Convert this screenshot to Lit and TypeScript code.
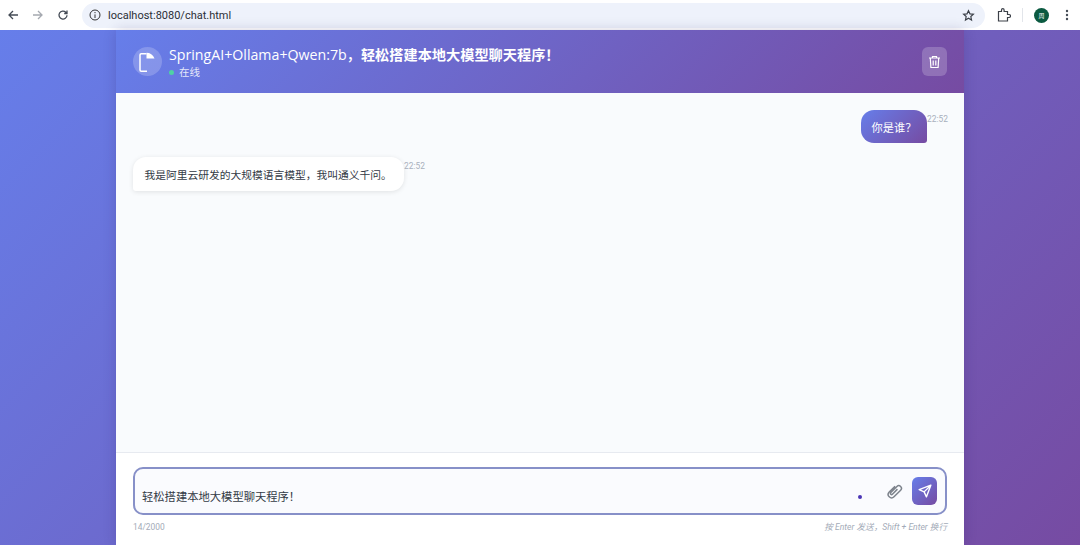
import { LitElement, html, css } from "lit";
import { customElement } from "lit/decorators.js";

@customElement("app-root")
export class AppRoot extends LitElement {
  static styles = css`
    :host { display: block; width: 1080px; height: 545px; overflow: hidden; font-family: "Open Sans", "Noto Sans CJK SC", sans-serif; }
    .browser { height: 30px; background: #fff; display: flex; align-items: center; box-sizing: border-box; padding: 0 0 0 7px; }
    .nav { width: 12px; height: 12px; margin-right: 13px; display: block; flex: none; }
    .pill { width: 903px; height: 25px; border-radius: 13px; background: #eef2fb; display: flex; align-items: center; box-sizing: border-box; padding: 0 10px 0 7px; flex: none; }
    .pill .url { margin-left: 7px; font: 11px "Roboto", "Liberation Sans", sans-serif; color: #2b2f36; flex: 1; }
    .tools { display: flex; align-items: center; flex: none; margin-left: 12px; }
    .sep { width: 1px; height: 14px; background: #e2e5ea; margin: 0 11px 0 11px; }
    .avatar { width: 15px; height: 15px; border-radius: 50%; background: #0b5a41; color: #fff; font-size: 6px; display: flex; align-items: center; justify-content: center; }
    .dots { margin-left: 16px; }
    .page { height: 515px; display: flex; justify-content: center; background: linear-gradient(135deg, #667eea 0%, #764ba2 100%); }
    .card { width: 848px; height: 515px; display: flex; flex-direction: column; box-shadow: 0 0 12px rgba(40, 30, 90, .2); }
    .header { height: 63px; flex: none; box-sizing: border-box; padding: 0 17px; display: flex; align-items: center; color: #fff; background: linear-gradient(135deg, #667eea 0%, #764ba2 100%); }
    .logo { width: 29px; height: 29px; border-radius: 50%; background: rgba(255, 255, 255, .2); display: flex; align-items: center; justify-content: center; flex: none; margin-right: 7px; }
    .titles { flex: 1; display: flex; flex-direction: column; margin-top: 1px; }
    .title { font-size: 14.2px; font-weight: 500; line-height: 19px; white-space: nowrap; }
    .title b { font-weight: 700; }
    .status { font-size: 10.5px; line-height: 14px; margin-top: 1px; display: flex; align-items: center; color: rgba(255, 255, 255, .85); }
    .dot { width: 5px; height: 5px; border-radius: 50%; background: #4fd1a5; margin-right: 5px; }
    .trash { width: 25px; height: 29px; border-radius: 6px; background: rgba(255, 255, 255, .2); display: flex; align-items: center; justify-content: center; }
    .messages { flex: 1; min-height: 0; background: #f9fbfd; box-sizing: border-box; padding: 17px 17px 0; display: flex; flex-direction: column; gap: 14px; border-bottom: 1px solid #e7eaf0; }
    .row { display: flex; align-items: flex-start; }
    .row.me { justify-content: flex-end; }
    .bubble { box-sizing: border-box; height: 33px; display: flex; align-items: center; white-space: nowrap; }
    .me .bubble { width: 66px; font-size: 11.2px; justify-content: center; color: #fff; border-radius: 13px 13px 3px 13px; background: linear-gradient(135deg, #667eea 0%, #764ba2 100%); }
    .bot .bubble { width: 271px; height: 34px; font-size: 10.75px; padding-left: 11.5px; color: #333a45; background: #fff; border-radius: 13px 13px 13px 3px; box-shadow: 0 1px 5px rgba(0, 0, 0, .1); }
    .time { width: 20px; font: 8.4px "Roboto", sans-serif; color: #a8b0bc; margin-top: 4px; white-space: nowrap; }
    .bottom { height: 92px; flex: none; background: #fff; box-sizing: border-box; padding: 14px 17px 0; }
    .input { height: 48px; box-sizing: border-box; border: 2px solid #8790c8; border-radius: 10px; background: #fafbfe; display: flex; align-items: center; padding: 0 8px 0 7px; }
    .text { flex: 1; align-self: flex-end; padding-bottom: 9px; font-size: 11.3px; line-height: 14px; color: #333a45; }
    .busy { width: 4px; height: 4px; border-radius: 50%; background: #4a35b5; margin: 12px 23px 0 0; }
    .clip { width: 18px; height: 18px; margin-right: 9px; display: block; }
    .send { width: 25px; height: 28px; border-radius: 6px; background: linear-gradient(135deg, #667eea 0%, #764ba2 100%); display: flex; align-items: center; justify-content: center; }
    .foot { display: flex; justify-content: space-between; margin-top: 6px; font: 8.4px "Roboto", "Noto Sans CJK SC", sans-serif; color: #a3abb8; line-height: 12px; }
    .foot i { font-size: 8.6px; }
  `;

  render() {
    return html`
      <div class="browser">
        <svg class="nav" viewBox="0 0 12 12" fill="none" stroke="#444b55" stroke-width="1.300"><path d="M11 6H2M6 2 2 6l4 4"/></svg>
        <svg class="nav" viewBox="0 0 12 12" fill="none" stroke="#a5a9b0" stroke-width="1.300"><path d="M1 6h9M6 2l4 4-4 4"/></svg>
        <svg class="nav" viewBox="0 0 12 12" fill="none" stroke="#444b55" stroke-width="1.300"><path d="M10 6.200A4 4 0 1 1 8.800 3.200L10 4.400M10 1.600v2.900H7.200"/></svg>
        <div class="pill">
          <svg width="12" height="12" viewBox="0 0 12 12" fill="none" stroke="#333" stroke-width="1"><circle cx="6" cy="6" r="5"/><path d="M6 5.400V9M6 3v1.200"/></svg>
          <span class="url">localhost:8080/chat.html</span>
          <svg width="13" height="13" viewBox="0 0 24 24" fill="none" stroke="#3c4149" stroke-width="2.200"><path d="m12 3 2.700 5.900 6.300.7-4.700 4.300 1.300 6.400-5.600-3.200-5.600 3.200 1.300-6.400L3 9.600l6.300-.7z"/></svg>
        </div>
        <div class="tools">
          <svg width="14" height="14" viewBox="0 0 14 14" fill="none" stroke="#3c4149" stroke-width="1.200"><path d="M1.500 3.500h3V2a1.300 1.300 0 0 1 2.600 0v1.500h3.400v3H12a1.500 1.500 0 0 1 0 3h-1.500v3.500h-9z"/></svg>
          <div class="sep"></div>
          <div class="avatar">周</div>
          <svg class="dots" width="4" height="12" viewBox="0 0 4 12" fill="#444b55"><circle cx="2" cy="2" r="1.200"/><circle cx="2" cy="6" r="1.200"/><circle cx="2" cy="10" r="1.200"/></svg>
        </div>
      </div>
      <div class="page">
        <div class="card">
          <div class="header">
            <div class="logo">
              <svg width="20" height="20" viewBox="0 0 20 20" fill="none" stroke="#fff" stroke-width="1.500"><path d="M8.500 1.800H3.200A1.200 1.200 0 0 0 2 3v15a1.200 1.200 0 0 0 1.200 1.200H9"/><path d="M8.500 .8c3.500 0 6.500 2 8 5.700h-8z" fill="#fff" stroke="none"/></svg>
            </div>
            <div class="titles">
              <div class="title">SpringAI+Ollama+Qwen:7b，<b>轻松搭建本地大模型聊天程序！</b></div>
              <div class="status"><span class="dot"></span>在线</div>
            </div>
            <div class="trash">
              <svg width="13" height="14" viewBox="0 0 13 14" fill="none" stroke="#fff" stroke-width="1.200"><path d="M1 3h11M4.500 3V1.500h4V3M2.300 3l.6 9.500h7.200l.6-9.500M5.200 5.500v5M7.800 5.500v5"/></svg>
            </div>
          </div>
          <div class="messages">
            <div class="row me"><div class="bubble">你是谁？</div><span class="time">22:52</span></div>
            <div class="row bot"><div class="bubble">我是阿里云研发的大规模语言模型，我叫通义千问。</div><span class="time">22:52</span></div>
          </div>
          <div class="bottom">
            <div class="input">
              <div class="text">轻松搭建本地大模型聊天程序！</div>
              <span class="busy"></span>
              <svg class="clip" viewBox="0 0 24 24" fill="none" stroke="#7d838c" stroke-width="2"><path transform="rotate(45 12 12)" d="M8.500 6.500v11a4.500 4.500 0 0 0 9 0V5a3.500 3.500 0 0 0-7 0v11.500a1.500 1.500 0 0 0 3 0V7"/></svg>
              <div class="send">
                <svg width="14" height="14" viewBox="0 0 24 24" fill="none" stroke="#fff" stroke-width="2.400" stroke-linejoin="round"><path d="M22 2 2 9.500l8.500 4L14.500 22zM10.500 13.500 22 2"/></svg>
              </div>
            </div>
            <div class="foot"><span>14/2000</span><i>按 Enter 发送，Shift + Enter 换行</i></div>
          </div>
        </div>
      </div>
    `;
  }
}
